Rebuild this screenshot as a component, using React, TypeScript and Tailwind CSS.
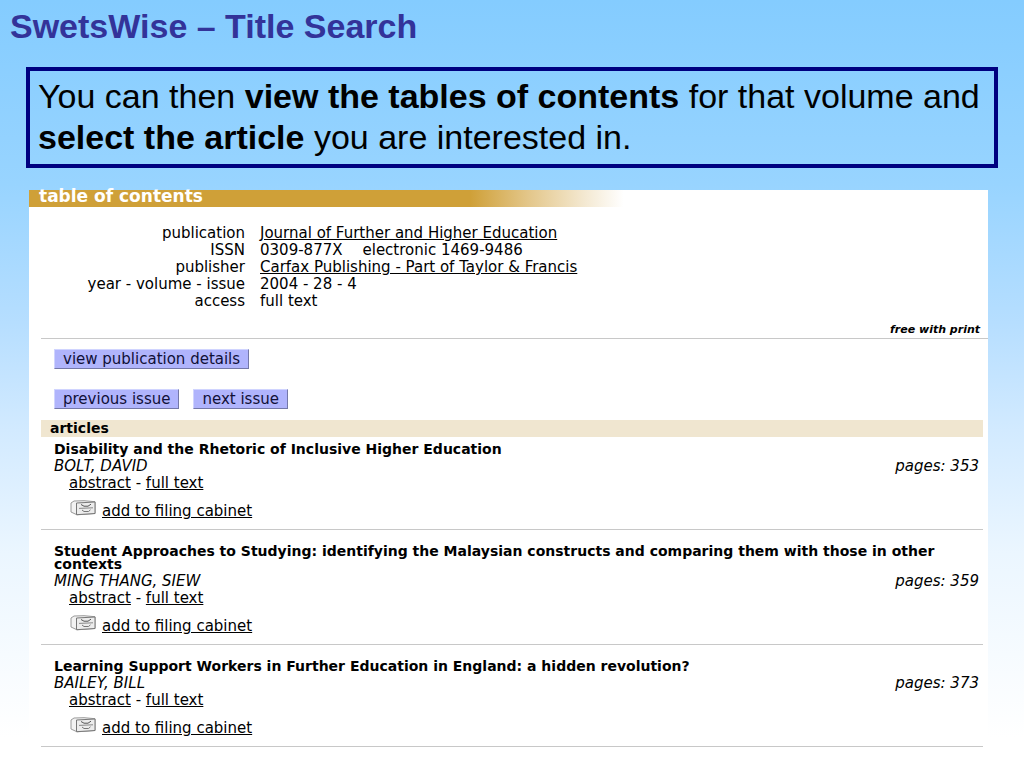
type Article = {
  title: string;
  author: string;
  pages: number;
};

const articles: Article[] = [
  {
    title: "Disability and the Rhetoric of Inclusive Higher Education",
    author: "BOLT, DAVID",
    pages: 353,
  },
  {
    title:
      "Student Approaches to Studying: identifying the Malaysian constructs and comparing them with those in other contexts",
    author: "MING THANG, SIEW",
    pages: 359,
  },
  {
    title:
      "Learning Support Workers in Further Education in England: a hidden revolution?",
    author: "BAILEY, BILL",
    pages: 373,
  },
];

const buttonClass =
  "h-5 px-2 bg-[#b0b4fc] border border-t-[#d0d4ff] border-l-[#d0d4ff] border-r-[#7478a8] border-b-[#7478a8] leading-4 text-[#101038] whitespace-nowrap";

function CabinetIcon() {
  return (
    <svg
      width="26"
      height="16"
      viewBox="0 0 26 16"
      fill="none"
      aria-hidden="true"
      className="shrink-0 -mt-2"
    >
      <path d="M1 3 L4 1 L14 0.7 L25 1.7 V13.5 L7 14.8 L1 12 Z" fill="#f2f2f2" stroke="#9a9a9a" />
      <path d="M6.5 3 L25 2 V13.5 L6.5 14.7 Z" fill="#ececec" stroke="#777777" />
      <path d="M9 8.4 L23 7.8" stroke="#888888" />
      <path d="M11 4.5 L14 6.2 H18 L21 4.2" stroke="#555555" />
      <path d="M12 10 L14 11.5 H18.5 L20.5 9.8" stroke="#777777" />
    </svg>
  );
}

function ArticleItem({ article }: { article: Article }) {
  return (
    <li className="border-b border-[#c8c8c8] pt-[15px] pb-[9px] pl-[13px] pr-1 first:pt-1.5">
      <h3 className="mb-0.5 mr-10 text-[14px] font-bold leading-[13px]">{article.title}</h3>
      <div className="flex justify-between italic">
        <span>{article.author}</span>
        <span>pages: {article.pages}</span>
      </div>
      <div className="pl-[15px]">
        <a href="#" className="underline">abstract</a>
        {" - "}
        <a href="#" className="underline">full text</a>
      </div>
      <div className="mt-[11px] flex items-center gap-1.5 pl-4">
        <CabinetIcon />
        <a href="#" className="underline">add to filing cabinet</a>
      </div>
    </li>
  );
}

export default function App() {
  return (
    <main className="min-h-screen bg-[linear-gradient(to_bottom,#84ccff_0%,#98d4ff_24%,#b6deff_42%,#d2eaff_56%,#ebf6ff_72%,#ffffff_96%)] font-['Liberation_Sans',Arial,sans-serif] text-black">
      <h1 className="px-2.5 pt-1.5 text-[34px] font-bold leading-[41px] text-[#333399]">
        SwetsWise – Title Search
      </h1>

      <p className="mx-[26px] mt-5 border-4 border-[#000080] px-2 pt-[5px] pb-1.5 text-[34px] leading-[41px]">
        You can then <b>view the tables of contents</b> for that volume and{" "}
        <b>select the article</b> you are interested in.
      </p>

      <section className="mt-[22px] ml-[29px] mr-9 bg-white pb-5 font-['DejaVu_Sans',Verdana,sans-serif] text-[15px] leading-[17px]">
        <h2 className="bg-[linear-gradient(to_right,#cfa038_0%,#cfa038_46%,#e3c689_52%,#f4e9d2_58%,#ffffff_62%)] pl-2.5 pb-1 text-[17px] font-bold leading-[13px] text-white">
          table of contents
        </h2>

        <dl className="mt-[18px] grid grid-cols-[216px_1fr] gap-x-[15px]">
          <dt className="text-right">publication</dt>
          <dd>
            <a href="#" className="underline">Journal of Further and Higher Education</a>
          </dd>
          <dt className="text-right">ISSN</dt>
          <dd className="flex gap-5">
            <span>0309-877X</span>
            <span>electronic 1469-9486</span>
          </dd>
          <dt className="text-right">publisher</dt>
          <dd>
            <a href="#" className="underline">Carfax Publishing - Part of Taylor &amp; Francis</a>
          </dd>
          <dt className="text-right">year - volume - issue</dt>
          <dd>2004 - 28 - 4</dd>
          <dt className="text-right">access</dt>
          <dd>full text</dd>
        </dl>

        <p className="ml-3 mt-3 border-b border-[#c8c8c8] pr-2 text-right text-[11px] font-bold italic leading-4">
          free with print
        </p>

        <div className="mt-2.5 flex pl-[25px]">
          <button type="button" className={buttonClass}>view publication details</button>
        </div>
        <div className="mt-5 flex gap-3.5 pl-[25px]">
          <button type="button" className={buttonClass}>previous issue</button>
          <button type="button" className={buttonClass}>next issue</button>
        </div>

        <div className="ml-3 mr-[5px] mt-[11px]">
          <h2 className="bg-[#f0e6d0] pl-[9px] text-[14px] font-bold">articles</h2>
          <ul>
            {articles.map((article) => (
              <ArticleItem key={article.pages} article={article} />
            ))}
          </ul>
        </div>
      </section>
    </main>
  );
}
